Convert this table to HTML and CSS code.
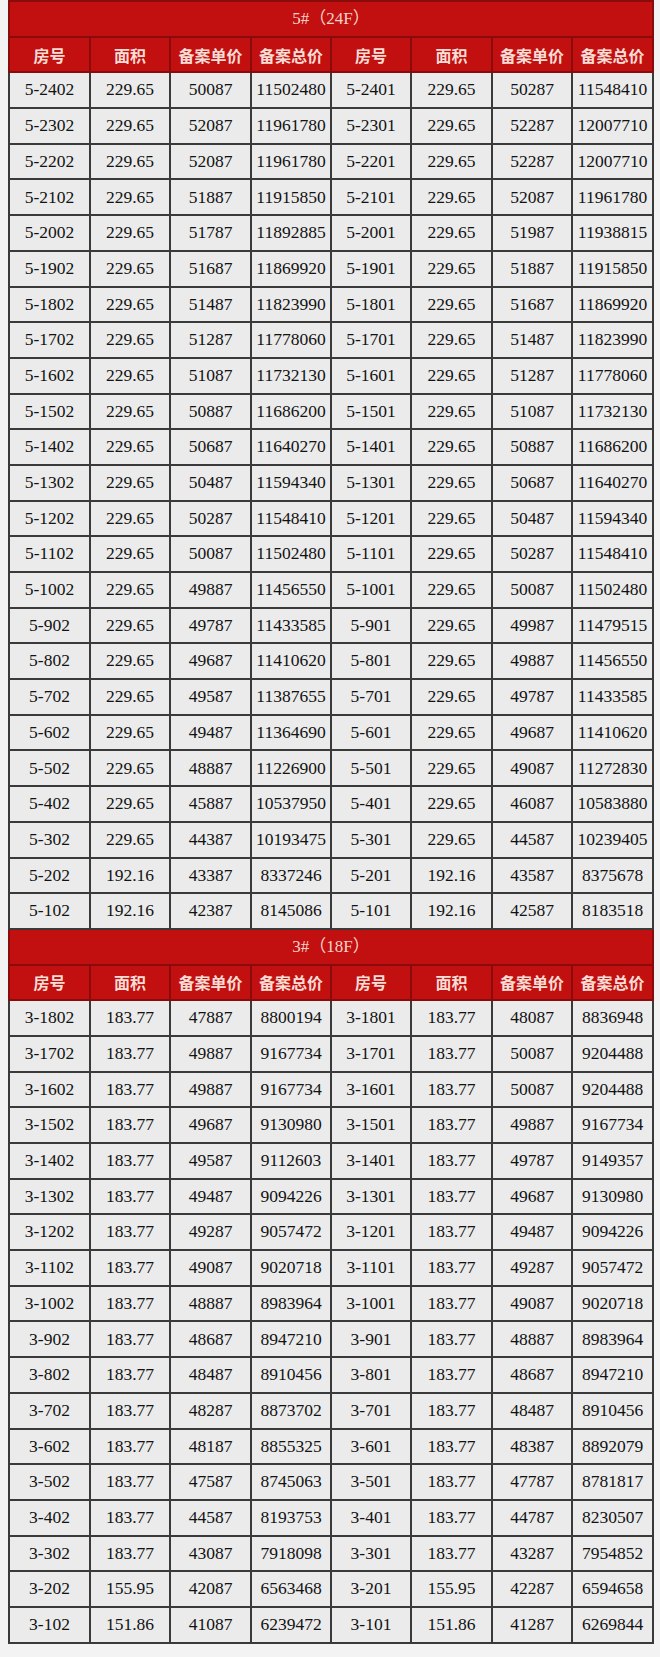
FILE: index.html
```html
<!DOCTYPE html>
<html lang="zh">
<head>
<meta charset="utf-8">
<title>备案价格表</title>
<link rel="stylesheet" href="styles.css">
</head>
<body>
<table class="sheet">
<colgroup>
<col class="c81"><col class="c80"><col class="c81"><col class="c80"><col class="c80"><col class="c81"><col class="c80"><col class="c81">
</colgroup>
<tbody>
<tr class="title"><td colspan="8">5#（24F）</td></tr>
<tr class="head"><th>房号</th><th>面积</th><th>备案单价</th><th>备案总价</th><th>房号</th><th>面积</th><th>备案单价</th><th>备案总价</th></tr>
<tr><td>5-2402</td><td>229.65</td><td>50087</td><td>11502480</td><td>5-2401</td><td>229.65</td><td>50287</td><td>11548410</td></tr>
<tr><td>5-2302</td><td>229.65</td><td>52087</td><td>11961780</td><td>5-2301</td><td>229.65</td><td>52287</td><td>12007710</td></tr>
<tr><td>5-2202</td><td>229.65</td><td>52087</td><td>11961780</td><td>5-2201</td><td>229.65</td><td>52287</td><td>12007710</td></tr>
<tr><td>5-2102</td><td>229.65</td><td>51887</td><td>11915850</td><td>5-2101</td><td>229.65</td><td>52087</td><td>11961780</td></tr>
<tr><td>5-2002</td><td>229.65</td><td>51787</td><td>11892885</td><td>5-2001</td><td>229.65</td><td>51987</td><td>11938815</td></tr>
<tr><td>5-1902</td><td>229.65</td><td>51687</td><td>11869920</td><td>5-1901</td><td>229.65</td><td>51887</td><td>11915850</td></tr>
<tr><td>5-1802</td><td>229.65</td><td>51487</td><td>11823990</td><td>5-1801</td><td>229.65</td><td>51687</td><td>11869920</td></tr>
<tr><td>5-1702</td><td>229.65</td><td>51287</td><td>11778060</td><td>5-1701</td><td>229.65</td><td>51487</td><td>11823990</td></tr>
<tr><td>5-1602</td><td>229.65</td><td>51087</td><td>11732130</td><td>5-1601</td><td>229.65</td><td>51287</td><td>11778060</td></tr>
<tr><td>5-1502</td><td>229.65</td><td>50887</td><td>11686200</td><td>5-1501</td><td>229.65</td><td>51087</td><td>11732130</td></tr>
<tr><td>5-1402</td><td>229.65</td><td>50687</td><td>11640270</td><td>5-1401</td><td>229.65</td><td>50887</td><td>11686200</td></tr>
<tr><td>5-1302</td><td>229.65</td><td>50487</td><td>11594340</td><td>5-1301</td><td>229.65</td><td>50687</td><td>11640270</td></tr>
<tr><td>5-1202</td><td>229.65</td><td>50287</td><td>11548410</td><td>5-1201</td><td>229.65</td><td>50487</td><td>11594340</td></tr>
<tr><td>5-1102</td><td>229.65</td><td>50087</td><td>11502480</td><td>5-1101</td><td>229.65</td><td>50287</td><td>11548410</td></tr>
<tr><td>5-1002</td><td>229.65</td><td>49887</td><td>11456550</td><td>5-1001</td><td>229.65</td><td>50087</td><td>11502480</td></tr>
<tr><td>5-902</td><td>229.65</td><td>49787</td><td>11433585</td><td>5-901</td><td>229.65</td><td>49987</td><td>11479515</td></tr>
<tr><td>5-802</td><td>229.65</td><td>49687</td><td>11410620</td><td>5-801</td><td>229.65</td><td>49887</td><td>11456550</td></tr>
<tr><td>5-702</td><td>229.65</td><td>49587</td><td>11387655</td><td>5-701</td><td>229.65</td><td>49787</td><td>11433585</td></tr>
<tr><td>5-602</td><td>229.65</td><td>49487</td><td>11364690</td><td>5-601</td><td>229.65</td><td>49687</td><td>11410620</td></tr>
<tr><td>5-502</td><td>229.65</td><td>48887</td><td>11226900</td><td>5-501</td><td>229.65</td><td>49087</td><td>11272830</td></tr>
<tr><td>5-402</td><td>229.65</td><td>45887</td><td>10537950</td><td>5-401</td><td>229.65</td><td>46087</td><td>10583880</td></tr>
<tr><td>5-302</td><td>229.65</td><td>44387</td><td>10193475</td><td>5-301</td><td>229.65</td><td>44587</td><td>10239405</td></tr>
<tr><td>5-202</td><td>192.16</td><td>43387</td><td>8337246</td><td>5-201</td><td>192.16</td><td>43587</td><td>8375678</td></tr>
<tr><td>5-102</td><td>192.16</td><td>42387</td><td>8145086</td><td>5-101</td><td>192.16</td><td>42587</td><td>8183518</td></tr>
<tr class="title"><td colspan="8">3#（18F）</td></tr>
<tr class="head"><th>房号</th><th>面积</th><th>备案单价</th><th>备案总价</th><th>房号</th><th>面积</th><th>备案单价</th><th>备案总价</th></tr>
<tr><td>3-1802</td><td>183.77</td><td>47887</td><td>8800194</td><td>3-1801</td><td>183.77</td><td>48087</td><td>8836948</td></tr>
<tr><td>3-1702</td><td>183.77</td><td>49887</td><td>9167734</td><td>3-1701</td><td>183.77</td><td>50087</td><td>9204488</td></tr>
<tr><td>3-1602</td><td>183.77</td><td>49887</td><td>9167734</td><td>3-1601</td><td>183.77</td><td>50087</td><td>9204488</td></tr>
<tr><td>3-1502</td><td>183.77</td><td>49687</td><td>9130980</td><td>3-1501</td><td>183.77</td><td>49887</td><td>9167734</td></tr>
<tr><td>3-1402</td><td>183.77</td><td>49587</td><td>9112603</td><td>3-1401</td><td>183.77</td><td>49787</td><td>9149357</td></tr>
<tr><td>3-1302</td><td>183.77</td><td>49487</td><td>9094226</td><td>3-1301</td><td>183.77</td><td>49687</td><td>9130980</td></tr>
<tr><td>3-1202</td><td>183.77</td><td>49287</td><td>9057472</td><td>3-1201</td><td>183.77</td><td>49487</td><td>9094226</td></tr>
<tr><td>3-1102</td><td>183.77</td><td>49087</td><td>9020718</td><td>3-1101</td><td>183.77</td><td>49287</td><td>9057472</td></tr>
<tr><td>3-1002</td><td>183.77</td><td>48887</td><td>8983964</td><td>3-1001</td><td>183.77</td><td>49087</td><td>9020718</td></tr>
<tr><td>3-902</td><td>183.77</td><td>48687</td><td>8947210</td><td>3-901</td><td>183.77</td><td>48887</td><td>8983964</td></tr>
<tr><td>3-802</td><td>183.77</td><td>48487</td><td>8910456</td><td>3-801</td><td>183.77</td><td>48687</td><td>8947210</td></tr>
<tr><td>3-702</td><td>183.77</td><td>48287</td><td>8873702</td><td>3-701</td><td>183.77</td><td>48487</td><td>8910456</td></tr>
<tr><td>3-602</td><td>183.77</td><td>48187</td><td>8855325</td><td>3-601</td><td>183.77</td><td>48387</td><td>8892079</td></tr>
<tr><td>3-502</td><td>183.77</td><td>47587</td><td>8745063</td><td>3-501</td><td>183.77</td><td>47787</td><td>8781817</td></tr>
<tr><td>3-402</td><td>183.77</td><td>44587</td><td>8193753</td><td>3-401</td><td>183.77</td><td>44787</td><td>8230507</td></tr>
<tr><td>3-302</td><td>183.77</td><td>43087</td><td>7918098</td><td>3-301</td><td>183.77</td><td>43287</td><td>7954852</td></tr>
<tr><td>3-202</td><td>155.95</td><td>42087</td><td>6563468</td><td>3-201</td><td>155.95</td><td>42287</td><td>6594658</td></tr>
<tr><td>3-102</td><td>151.86</td><td>41087</td><td>6239472</td><td>3-101</td><td>151.86</td><td>41287</td><td>6269844</td></tr>
</tbody>
</table>
</body>
</html>
```
FILE: styles.css
```css
html, body {
  margin: 0;
  padding: 0;
  background: #f3f3f3;
}

.sheet {
  margin-left: 8px;
  width: 644px;
  border-collapse: collapse;
  table-layout: fixed;
  font-family: "Liberation Serif", "Noto Sans CJK SC", serif;
}

.c81 { width: 81px; }
.c80 { width: 80px; }

.sheet td,
.sheet th {
  height: 33.7px;
  padding: 0;
  text-align: center;
  vertical-align: middle;
  border: 2px solid #3a3a3a;
  background: #ebebeb;
  color: #121212;
  font-size: 17.5px;
  font-weight: normal;
  line-height: 1;
  white-space: nowrap;
}

.sheet .title td {
  background: #c20f10;
  color: #f5d3c9;
  border-color: #8a0b0b;
  font-size: 17px;
}

.sheet .head th {
  background: #c20f10;
  color: #f8ddd5;
  border-color: #8a0b0b;
  font-family: "Noto Sans CJK SC", sans-serif;
  font-weight: bold;
  font-size: 16px;
}
```
